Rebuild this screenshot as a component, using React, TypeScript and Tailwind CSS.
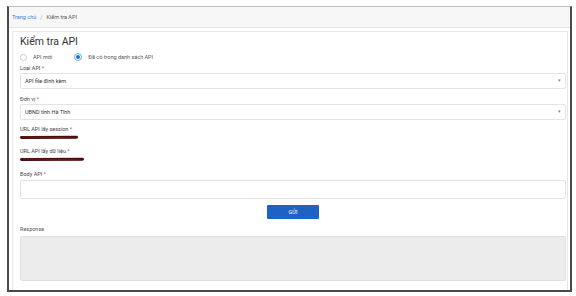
import React, { useState } from 'react'

const Label: React.FC<{ text: string; required?: boolean }> = ({ text, required }) => (
  <div className="text-[5.5px] leading-[7px] text-[#444]">
    {text} {required && <span className="text-[#d33]">*</span>}
  </div>
)

const SelectBox: React.FC<{ value: string }> = ({ value }) => (
  <div className="flex items-center justify-between h-[16px] border border-[#e3e3e3] rounded-[2px] px-[4px] mt-[1px]">
    <span className="text-[5.5px] text-[#333]">{value}</span>
    <span className="text-[5px] text-[#888]">▾</span>
  </div>
)

// redacted url, drawn as a dark red marker stroke
const Scribble: React.FC<{ width: number }> = ({ width }) => (
  <svg width={width} height="5" viewBox={`0 0 ${width} 5`} className="block">
    <path d={`M1.5 2.5 L ${width - 1.5} 2.3`} stroke="#4a0c0c" strokeWidth="3" fill="none" strokeLinecap="round" />
    <path d={`M3 2 L ${width - 4} 2.8`} stroke="#7a1a1a" strokeWidth="0.8" fill="none" />
  </svg>
)

export default function App() {
  const [mode, setMode] = useState<'new' | 'list'>('list')

  return (
    <div className="w-[576px] h-[296px] bg-white pt-[6px] pl-[7px]" style={{ fontFamily: 'Roboto, "Noto Sans", sans-serif' }}>
      <div className="w-[565px] h-[286px] border-2 border-[#4a4a4a] border-t border-t-[#bbb] bg-white flex flex-col">
        {/* breadcrumb */}
        <div className="h-[21px] bg-[#f7f7f7] border-b border-[#e6e6e6] flex items-center px-[3px] text-[5.5px]">
          <span className="text-[#3b7dd8]">Trang chủ</span>
          <span className="text-[#aaa] mx-[4px]">/</span>
          <span className="text-[#555]">Kiểm tra API</span>
        </div>

        <div className="flex-1 ml-[3px] mr-[2px] mt-[3px] border border-[#e8e8e8] border-b-0 pl-[7px] pr-[1px] pt-[4px]">
          <div className="text-[10.5px] leading-[12px] text-[#333]">Kiểm tra API</div>

          <div className="flex items-center gap-[22px] mt-[4px] h-[10px]">
            <label className="flex items-center gap-[6px] cursor-pointer" onClick={() => setMode('new')}>
              <span className="w-[7px] h-[7px] rounded-full border border-[#ccc] flex items-center justify-center">
                {mode === 'new' && <span className="w-[3px] h-[3px] rounded-full bg-[#1a73c8]" />}
              </span>
              <span className="text-[5.5px] text-[#555]">API mới</span>
            </label>
            <label className="flex items-center gap-[6px] cursor-pointer" onClick={() => setMode('list')}>
              <span className="w-[8px] h-[8px] rounded-full border border-[#6ab0d8] flex items-center justify-center">
                {mode === 'list' && <span className="w-[4px] h-[4px] rounded-full bg-[#1a73c8]" />}
              </span>
              <span className="text-[5.5px] text-[#555]">Đã có trong danh sách API</span>
            </label>
          </div>

          <div className="mt-[3px]">
            <Label text="Loại API" required />
            <SelectBox value="API file đính kèm" />
          </div>

          <div className="mt-[7px]">
            <Label text="Đơn vị" required />
            <SelectBox value="UBND tỉnh Hà Tĩnh" />
          </div>

          <div className="mt-[6px]">
            <Label text="URL API lấy session" required />
            <div className="mt-[2px]"><Scribble width={58} /></div>
          </div>

          <div className="mt-[8px]">
            <Label text="URL API lấy dữ liệu" required />
            <div className="mt-[2px]"><Scribble width={64} /></div>
          </div>

          <div className="mt-[9px]">
            <Label text="Body API" required />
            <div className="h-[19px] border border-[#e3e3e3] rounded-[2px] mt-[2px]" />
          </div>

          <div className="flex justify-center mt-[6px]">
            <button className="w-[52px] h-[14px] bg-[#1e63c4] text-white text-[5.5px] rounded-[1px]">GỬI</button>
          </div>

          <div className="mt-[7px]">
            <div className="text-[5.5px] leading-[7px] text-[#555]">Response</div>
            <div className="h-[45px] bg-[#ececec] border border-[#e0e0e0] rounded-[2px] mt-[3px]" />
          </div>
        </div>
      </div>
    </div>
  )
}
